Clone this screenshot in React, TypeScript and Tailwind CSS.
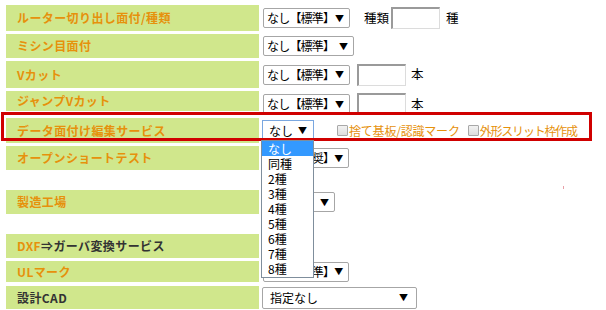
import React from "react";

const G = "bg-[#d0e78c]";
const font = { fontFamily: '"Noto Sans CJK JP", "Noto Sans", sans-serif' };

function Sel({ w, text, focused }: { w: number; text: string; focused?: boolean }) {
  return (
    <div
      className={`flex h-[20px] items-center justify-between rounded-[2px] border bg-white pl-[3px] pr-[5px] text-[12px] leading-none tracking-[-0.8px] text-black ${focused ? "border-[#7aa7e0]" : "border-[#a6a6a6]"}`}
      style={{ width: w }}
    >
      <span className="whitespace-nowrap">{text}</span>
      <span className="text-[9px] tracking-normal">▼</span>
    </div>
  );
}

function Inp({ w = 49 }: { w?: number }) {
  return (
    <div
      className="h-[22px] border-t-2 border-l-2 border-r border-b border-t-[#9a9a9a] border-l-[#9a9a9a] border-r-[#dcdcdc] border-b-[#dcdcdc] bg-white"
      style={{ width: w }}
    />
  );
}

function Label({ children, h, mt = 3 }: { children: React.ReactNode; h: number; mt?: number }) {
  return (
    <div
      className={`${G} flex w-[253px] shrink-0 items-center pl-[11px] text-[12px] font-bold tracking-[0.4px] text-[#e6910c]`}
      style={{ height: h, marginTop: mt }}
    >
      {children}
    </div>
  );
}

function Check({ label, tight }: { label: string; tight?: boolean }) {
  return (
    <div className="flex items-center">
      <div className="h-[11px] w-[11px] rounded-[1px] border border-[#a8a8a8] bg-gradient-to-b from-[#f2f2f2] to-[#dedede]" />
      <span className={`ml-[1px] whitespace-nowrap text-[12px] text-[#e6910c] ${tight ? "tracking-[-1.2px]" : "tracking-[-0.2px]"}`}>{label}</span>
    </div>
  );
}

export default function App() {
  const opts = ["なし", "同種", "2種", "3種", "4種", "5種", "6種", "7種", "8種"];
  return (
    <div className="relative h-[310px] w-[606px] overflow-hidden bg-white pl-[6px] pt-[2px]" style={font}>
      {/* row 1 */}
      <div className="flex">
        <Label h={26}>ルーター切り出し面付/種類</Label>
        <div className="flex items-center pl-[4px] pt-[3px] text-[12.5px] text-black">
          <Sel w={87} text="なし【標準】" />
          <span className="ml-[14px]">種類</span>
          <div className="ml-[2px]"><Inp /></div>
          <span className="ml-[6px]">種</span>
        </div>
      </div>
      {/* row 2 */}
      <div className="flex">
        <Label h={24}>ミシン目面付</Label>
        <div className="flex items-center pl-[4px] pt-[3px]">
          <Sel w={91} text="なし【標準】" />
        </div>
      </div>
      {/* row 3 */}
      <div className="flex">
        <Label h={27}>Vカット</Label>
        <div className="flex items-center pl-[4px] pt-[3px] text-[12.5px] text-black">
          <Sel w={87} text="なし【標準】" />
          <div className="ml-[7px]"><Inp /></div>
          <span className="ml-[5px]">本</span>
        </div>
      </div>
      {/* row 4 */}
      <div className="flex">
        <Label h={20}>ジャンプVカット</Label>
        <div className="flex items-center pl-[4px] pt-[5px] text-[12.5px] text-black">
          <Sel w={87} text="なし【標準】" />
          <div className="ml-[7px]"><Inp /></div>
          <span className="ml-[5px]">本</span>
        </div>
      </div>
      {/* row 5 */}
      <div className="flex">
        <Label h={25}>データ面付け編集サービス</Label>
        <div className="flex items-center pl-[3px] pt-[3px]">
          <div className="relative">
            <div className="flex h-[21px] w-[52px] items-center justify-between border border-[#7aa7e0] bg-white pl-[6px] pr-[6px] text-[12px] text-black">
              <span>なし</span>
              <span className="text-[9px]">▼</span>
            </div>
            <div className="absolute left-[-1px] top-[20px] z-20 w-[53px] border border-[#7f8e9c] bg-white pb-[1px]">
              {opts.map((o, i) => (
                <div
                  key={o}
                  className={`h-[15px] pl-[6px] text-[12px] leading-[15px] ${i === 0 ? "bg-[#3399ff] text-white" : "text-black"}`}
                >
                  {o}
                </div>
              ))}
            </div>
          </div>
          <div className="ml-[23px]"><Check label="捨て基板/認識マーク" /></div>
          <div className="ml-[8px]"><Check label="外形スリット枠作成" tight /></div>
        </div>
      </div>
      {/* row 6 */}
      <div className="flex">
        <Label h={24}>オープンショートテスト</Label>
        <div className="flex items-center pl-[4px] pt-[3px]">
          <Sel w={86} text="あり【推奨】" />
        </div>
      </div>
      {/* row 7 */}
      <div className="flex">
        <Label h={24} mt={20}>製造工場</Label>
        <div className="flex items-center pl-[4px] pt-[20px]">
          <Sel w={72} text="指定なし" />
        </div>
      </div>
      {/* row 8 */}
      <div className="flex">
        <Label h={24} mt={20}>
          <span>DXF</span>
          <span className="text-[#333333]">⇒ガーバ変換サービス</span>
        </Label>
      </div>
      {/* row 9 */}
      <div className="flex">
        <Label h={21}>ULマーク</Label>
        <div className="flex items-center pl-[4px] pt-[3px]">
          <Sel w={86} text="なし【標準】" />
        </div>
      </div>
      {/* row 10 */}
      <div className="flex">
        <div className={`${G} mt-[4px] flex h-[23px] w-[253px] items-center pl-[11px] text-[12px] font-bold tracking-[0.4px] text-[#333333]`}>
          設計CAD
        </div>
        <div className="flex items-center pl-[3px] pt-[4px]">
          <div className="flex h-[22px] w-[155px] items-center justify-between rounded-[2px] border border-[#a6a6a6] bg-white pl-[7px] pr-[8px] text-[12px] text-black">
            <span>指定なし</span>
            <span className="text-[9px]">▼</span>
          </div>
        </div>
      </div>

      {/* red annotation box */}
      <div className="pointer-events-none absolute left-[1px] top-[112px] z-10 h-[29px] w-[591px] border-[3px] border-[#d00000]" />
      {/* stray pink dot */}
      <div className="absolute left-[563px] top-[186px] h-[3px] w-[1px] bg-[#e8a0a8]" />
    </div>
  );
}
